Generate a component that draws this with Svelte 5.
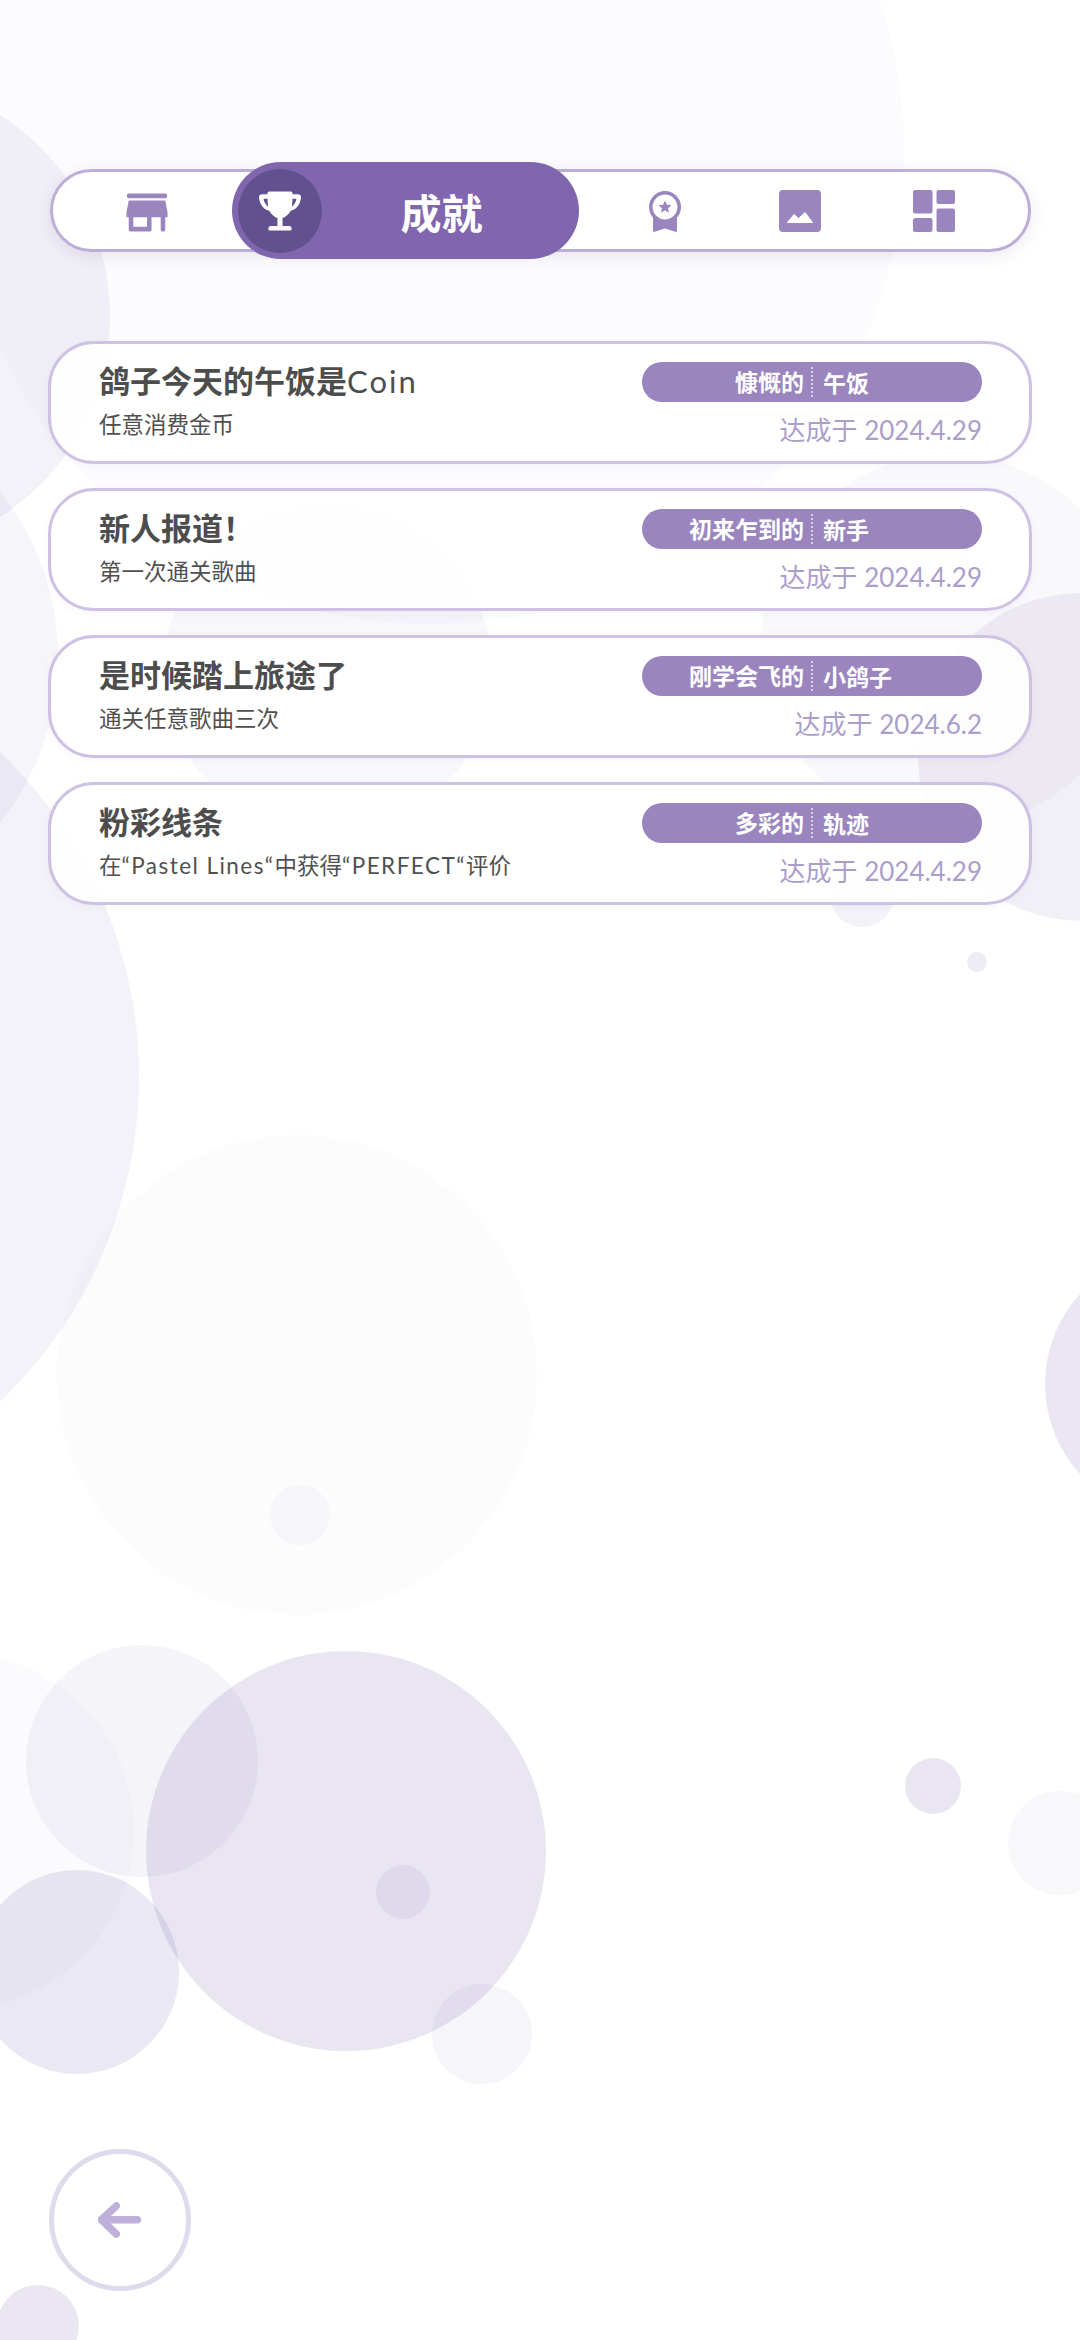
<script lang="ts">
	// cx, cy, r, alpha — in page pixels
	const bubbles = [
		[430, 150, 474, 0.02],
		[-129, 316, 239, 0.07],
		[-208, 657, 266, 0.05],
		[-310, 1077, 449, 0.07],
		[328, 670, 164, 0.045],
		[948, 642, 187, 0.035],
		[1082, 757, 164, 0.08],
		[862, 895, 32, 0.07],
		[977, 962, 10, 0.1],
		[1178, 1384, 133, 0.125],
		[297, 1375, 240, 0.015],
		[300, 1515, 30, 0.035],
		[346, 1851, 200, 0.13],
		[142, 1761, 116, 0.06],
		[-45, 1831, 179, 0.025],
		[77, 1972, 102, 0.12],
		[403, 1892, 27, 0.07],
		[482, 2034, 50, 0.055],
		[933, 1786, 28, 0.13],
		[1060, 1843, 52, 0.04],
		[38, 2326, 41, 0.125]
	];

	const achievements = [
		{ title: '鸽子今天的午饭是Coin', desc: '任意消费金币', left: '慷慨的', right: '午饭', date: '达成于 2024.4.29' },
		{ title: '新人报道！', desc: '第一次通关歌曲', left: '初来乍到的', right: '新手', date: '达成于 2024.4.29' },
		{ title: '是时候踏上旅途了', desc: '通关任意歌曲三次', left: '刚学会飞的', right: '小鸽子', date: '达成于 2024.6.2' },
		{ title: '粉彩线条', desc: '在“Pastel Lines“中获得“PERFECT“评价', left: '多彩的', right: '轨迹', date: '达成于 2024.4.29' }
	];

	// odd entries are the latin runs, they get their own spacing
	function runs(text: string) {
		return text.split(/([A-Za-z“ ]+)/);
	}
</script>

<div class="page">
	<div class="bubbles">
		{#each bubbles as [cx, cy, r, a]}
			<span
				class="bubble"
				style="left: {cx - r}px; top: {cy - r}px; width: {r * 2}px; height: {r * 2}px; background: rgba(85, 65, 155, {a})"
			></span>
		{/each}
	</div>

	<nav class="tabs">
		<div class="tab shop">
			<svg class="i-shop" viewBox="2.800 3.800 18.400 16.400" preserveAspectRatio="none"><path d="M20 4H4c-.5 0-.8.400-.8.800v.4c0 .4.300.8.800.8h16c.5 0 .8-.4.800-.8v-.4c0-.4-.3-.8-.8-.8zM20 7H4l-1 5v2h1v5.200c0 .5.300.8.800.8h8.400c.5 0 .8-.3.800-.8V14h4v5.200c0 .5.300.8.800.8h.4c.5 0 .8-.3.800-.8V14h1v-2zM12 18H6v-4h6z"/></svg>
		</div>
		<div class="tab active">
			<span class="disc">
				<svg viewBox="2.900 1.900 18.200 18.200"><path fill-rule="evenodd" d="M7.300 2.500H16.700a.7.7 0 0 1 .7.7V3.700H19.800c.8 0 1.400.6 1.300 1.400-.3 2.800-1.700 5-4.400 5.800-.9 1.600-2.200 2.700-3.600 3.100V17.500H16c.6 0 1 .4 1 1v.5a.5.5 0 0 1-.5.5H7.500a.5.5 0 0 1-.5-.5v-.5c0-.6.4-1 1-1H10.900V14C9.500 13.600 8.200 12.500 7.300 10.900 4.600 10.100 3.200 7.900 2.900 5.100 2.800 4.300 3.400 3.700 4.200 3.700H6.600V3.200A.7.7 0 0 1 7.300 2.500ZM4.900 5.700c.2 1.500.9 2.700 2 3.400-.2-1-.3-2.100-.3-3.400ZM19.100 5.700c-.2 1.500-.9 2.700-2 3.400.2-1 .3-2.100.3-3.400Z"/></svg>
			</span>
			<span class="tab-label">成就</span>
		</div>
		<div class="tab">
			<svg class="i-badge" viewBox="0 0 32 42">
				<path d="M4 26V40.700c0 1 .7 1.400 1.600 1.100L16 38.500l10.400 3.300c.9.300 1.600-.1 1.600-1.100V26Z"/>
				<circle cx="16" cy="17" r="14.200" fill="#fff" stroke="#9a85bf" stroke-width="3.600"/>
				<path d="M16 10.500l1.900 4.300 4.600.4-3.500 3 1.100 4.500-4.100-2.400-4.100 2.400 1.100-4.500-3.500-3 4.600-.4z"/>
			</svg>
		</div>
		<div class="tab">
			<svg viewBox="0 0 42 42">
				<rect width="42" height="42" rx="4"/>
				<path d="M8.500 32.500L15 24.500l4.500 4L26 22.500l7.500 10z" fill="#fff" stroke="#fff" stroke-linejoin="round"/>
			</svg>
		</div>
		<div class="tab">
			<svg viewBox="0 0 42 42">
				<rect width="19.500" height="23.500" rx="2"/>
				<rect y="28" width="19.500" height="14" rx="2"/>
				<rect x="23.500" width="18.500" height="14" rx="2"/>
				<rect x="23.500" y="18.500" width="18.500" height="23.500" rx="2"/>
			</svg>
		</div>
	</nav>

	<section class="list">
		{#each achievements as item}
			<article class="card">
				<div class="info">
					<h3>
						{#each runs(item.title) as run, i}
							{#if i % 2}<span class="latin">{run}</span>{:else}{run}{/if}
						{/each}
					</h3>
					<p>
						{#each runs(item.desc) as run, i}
							{#if i % 2}<span class="latin">{run}</span>{:else}{run}{/if}
						{/each}
					</p>
				</div>
				<div class="meta">
					<div class="tag">
						<span class="tag-left">{item.left}</span>
						<span class="tag-right">{item.right}</span>
					</div>
					<div class="date">{item.date}</div>
				</div>
			</article>
		{/each}
	</section>

	<button class="back" aria-label="Back">
		<svg viewBox="0 0 44 36"><path d="M18.300 4L3.300 17.700 18.300 32M4 17.700H39.300" fill="none" stroke-width="7.500" stroke-linecap="round" stroke-linejoin="round"/></svg>
	</button>
</div>

<style>
	:global(body) {
		margin: 0;
		background: #fff;
	}

	.page {
		position: relative;
		width: 1080px;
		height: 2340px;
		overflow: hidden;
		box-sizing: border-box;
		padding: 169px 48px 0;
		font-family: Lato, 'Noto Sans CJK SC', sans-serif;
		display: flex;
		flex-direction: column;
		color: #4a4a4a;
	}

	.bubbles {
		position: absolute;
		inset: 0;
	}

	.bubble {
		position: absolute;
		border-radius: 50%;
	}

	.tabs {
		position: relative;
		height: 83px;
		margin: 0 1px 0 2px;
		box-sizing: border-box;
		display: grid;
		grid-template-columns: 179px 347px 172px 98px 170px;
		grid-template-rows: 77px;
		align-items: center;
		background: #fff;
		border: 3px solid #bcaed6;
		border-radius: 42px;
		box-shadow: 0 4px 16px rgba(90, 70, 140, 0.12);
	}

	.tab {
		display: flex;
		justify-content: center;
		align-items: center;
	}

	.tab.shop {
		padding: 3px 0 0 8px;
	}

	.tab svg {
		width: 42px;
		height: 42px;
		fill: #9a85bf;
	}

	.tab svg.i-shop {
		width: 42px;
		height: 39px;
	}

	.tab svg.i-badge {
		width: 32px;
	}

	.tab.active {
		height: 97px;
		border-radius: 49px;
		background: #8066ae;
		justify-content: flex-start;
		padding-left: 6px;
		box-sizing: border-box;
		z-index: 1;
	}

	.disc {
		width: 84px;
		height: 84px;
		flex: none;
		border-radius: 50%;
		background: #62518f;
		display: flex;
		align-items: center;
		justify-content: center;
	}

	.disc svg {
		fill: #fff;
	}

	.tab-label {
		flex: 1;
		text-align: center;
		padding-right: 18px;
		color: #fff;
		font-size: 41px;
		font-weight: 700;
	}

	.list {
		position: relative;
		margin-top: 89px;
		display: flex;
		flex-direction: column;
		gap: 24px;
	}

	.card {
		height: 123px;
		box-sizing: border-box;
		display: flex;
		justify-content: space-between;
		padding: 18px 47px 0 48px;
		background: rgba(255, 255, 255, 0.9);
		border: 3px solid #cdc2e4;
		border-radius: 46px;
		box-shadow: 0 2px 8px rgba(90, 70, 140, 0.05);
	}

	.info {
		margin-top: -3px;
	}

	h3 {
		margin: 0;
		font-size: 31px;
		line-height: 44px;
		font-weight: 700;
		color: #4d4d4d;
	}

	p {
		margin: 5px 0 0;
		font-size: 22.500px;
		line-height: 34px;
		font-weight: 400;
		color: #505050;
	}

	.latin {
		font-weight: 400;
		letter-spacing: 0.065em;
	}

	.meta {
		width: 340px;
	}

	.tag {
		height: 40px;
		display: grid;
		grid-template-columns: 171px 1fr;
		align-items: center;
		border-radius: 20px;
		background: #9a85bf;
		color: #fff;
		font-size: 23px;
		font-weight: 700;
	}

	.tag-left {
		text-align: right;
		padding-right: 7px;
		border-right: 2px dotted #d9cfea;
		line-height: 30px;
	}

	.tag-right {
		padding-left: 10px;
	}

	.date {
		margin-top: 8px;
		text-align: right;
		font-size: 26px;
		line-height: 40px;
		font-weight: 400;
		color: #ab9ecb;
	}

	.back {
		position: absolute;
		left: 49px;
		top: 2149px;
		width: 142px;
		height: 142px;
		padding: 0;
		display: flex;
		align-items: center;
		justify-content: center;
		background: #fff;
		border: 5px solid #e0dbec;
		border-radius: 50%;
	}

	.back svg {
		width: 44px;
		height: 36px;
		stroke: #bfb0d9;
	}
</style>
